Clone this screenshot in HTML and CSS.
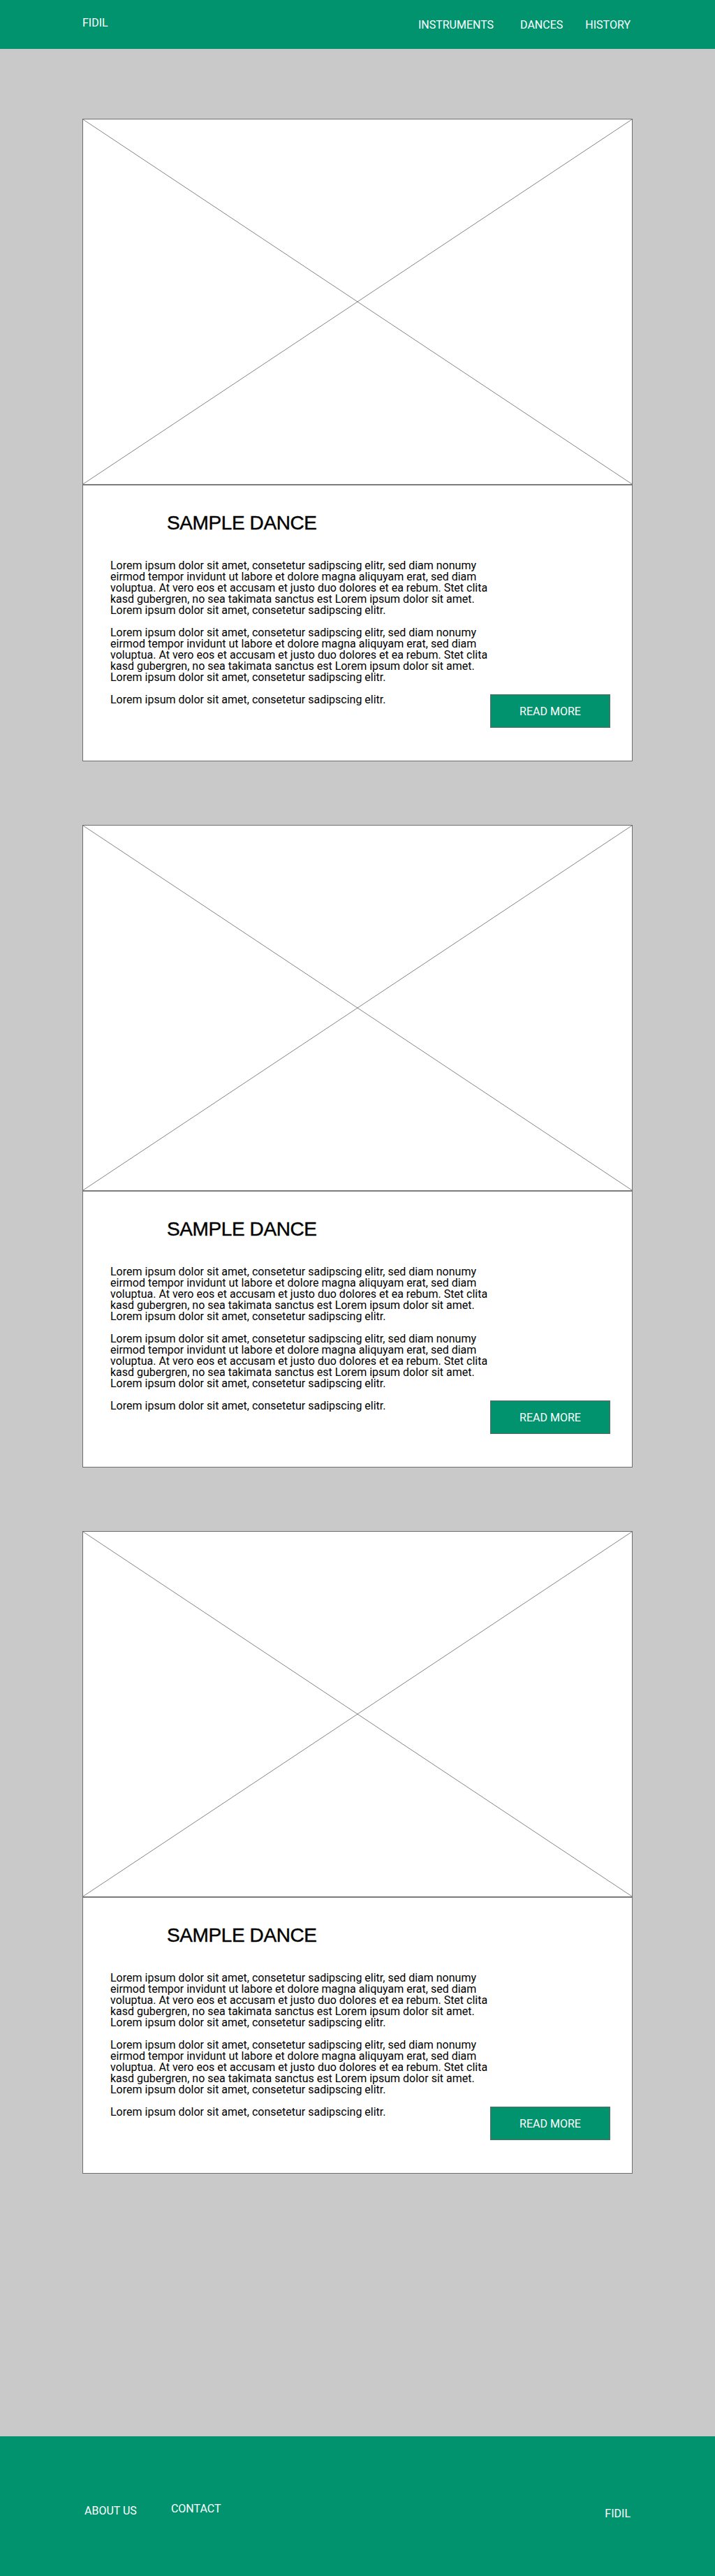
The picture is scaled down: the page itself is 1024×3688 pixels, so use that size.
FILE: index.html
```html
<!DOCTYPE html>
<html lang="en">
<head>
<meta charset="utf-8">
<title>FIDIL</title>
<link rel="stylesheet" href="styles.css">
</head>
<body>
<header class="topbar">
  <div class="brand">FIDIL</div>
  <nav class="nav">
    <a class="nav-item nav-instruments" href="#">INSTRUMENTS</a>
    <a class="nav-item nav-dances" href="#">DANCES</a>
    <a class="nav-item nav-history" href="#">HISTORY</a>
  </nav>
</header>

<main class="main">
  <article class="card">
    <div class="card-image">
      <svg class="placeholder" viewBox="0 0 100 100" preserveAspectRatio="none">
        <line x1="0" y1="0" x2="100" y2="100" vector-effect="non-scaling-stroke"/>
        <line x1="100" y1="0" x2="0" y2="100" vector-effect="non-scaling-stroke"/>
      </svg>
    </div>
    <div class="card-body">
      <h2 class="card-title">SAMPLE DANCE</h2>
      <p class="card-text">Lorem ipsum dolor sit amet, consetetur sadipscing elitr, sed diam nonumy<br>eirmod tempor invidunt ut labore et dolore magna aliquyam erat, sed diam<br>voluptua. At vero eos et accusam et justo duo dolores et ea rebum. Stet clita<br>kasd gubergren, no sea takimata sanctus est Lorem ipsum dolor sit amet.<br>Lorem ipsum dolor sit amet, consetetur sadipscing elitr.</p>
      <p class="card-text">Lorem ipsum dolor sit amet, consetetur sadipscing elitr, sed diam nonumy<br>eirmod tempor invidunt ut labore et dolore magna aliquyam erat, sed diam<br>voluptua. At vero eos et accusam et justo duo dolores et ea rebum. Stet clita<br>kasd gubergren, no sea takimata sanctus est Lorem ipsum dolor sit amet.<br>Lorem ipsum dolor sit amet, consetetur sadipscing elitr.</p>
      <div class="card-last">
        <p class="card-text">Lorem ipsum dolor sit amet, consetetur sadipscing elitr.</p>
        <a class="btn" href="#">READ MORE</a>
      </div>
    </div>
  </article>

  <article class="card">
    <div class="card-image">
      <svg class="placeholder" viewBox="0 0 100 100" preserveAspectRatio="none">
        <line x1="0" y1="0" x2="100" y2="100" vector-effect="non-scaling-stroke"/>
        <line x1="100" y1="0" x2="0" y2="100" vector-effect="non-scaling-stroke"/>
      </svg>
    </div>
    <div class="card-body">
      <h2 class="card-title">SAMPLE DANCE</h2>
      <p class="card-text">Lorem ipsum dolor sit amet, consetetur sadipscing elitr, sed diam nonumy<br>eirmod tempor invidunt ut labore et dolore magna aliquyam erat, sed diam<br>voluptua. At vero eos et accusam et justo duo dolores et ea rebum. Stet clita<br>kasd gubergren, no sea takimata sanctus est Lorem ipsum dolor sit amet.<br>Lorem ipsum dolor sit amet, consetetur sadipscing elitr.</p>
      <p class="card-text">Lorem ipsum dolor sit amet, consetetur sadipscing elitr, sed diam nonumy<br>eirmod tempor invidunt ut labore et dolore magna aliquyam erat, sed diam<br>voluptua. At vero eos et accusam et justo duo dolores et ea rebum. Stet clita<br>kasd gubergren, no sea takimata sanctus est Lorem ipsum dolor sit amet.<br>Lorem ipsum dolor sit amet, consetetur sadipscing elitr.</p>
      <div class="card-last">
        <p class="card-text">Lorem ipsum dolor sit amet, consetetur sadipscing elitr.</p>
        <a class="btn" href="#">READ MORE</a>
      </div>
    </div>
  </article>

  <article class="card">
    <div class="card-image">
      <svg class="placeholder" viewBox="0 0 100 100" preserveAspectRatio="none">
        <line x1="0" y1="0" x2="100" y2="100" vector-effect="non-scaling-stroke"/>
        <line x1="100" y1="0" x2="0" y2="100" vector-effect="non-scaling-stroke"/>
      </svg>
    </div>
    <div class="card-body">
      <h2 class="card-title">SAMPLE DANCE</h2>
      <p class="card-text">Lorem ipsum dolor sit amet, consetetur sadipscing elitr, sed diam nonumy<br>eirmod tempor invidunt ut labore et dolore magna aliquyam erat, sed diam<br>voluptua. At vero eos et accusam et justo duo dolores et ea rebum. Stet clita<br>kasd gubergren, no sea takimata sanctus est Lorem ipsum dolor sit amet.<br>Lorem ipsum dolor sit amet, consetetur sadipscing elitr.</p>
      <p class="card-text">Lorem ipsum dolor sit amet, consetetur sadipscing elitr, sed diam nonumy<br>eirmod tempor invidunt ut labore et dolore magna aliquyam erat, sed diam<br>voluptua. At vero eos et accusam et justo duo dolores et ea rebum. Stet clita<br>kasd gubergren, no sea takimata sanctus est Lorem ipsum dolor sit amet.<br>Lorem ipsum dolor sit amet, consetetur sadipscing elitr.</p>
      <div class="card-last">
        <p class="card-text">Lorem ipsum dolor sit amet, consetetur sadipscing elitr.</p>
        <a class="btn" href="#">READ MORE</a>
      </div>
    </div>
  </article>
</main>

<footer class="footer">
  <div class="footer-links">
    <a class="footer-link footer-about" href="#">ABOUT US</a>
    <a class="footer-link footer-contact" href="#">CONTACT</a>
  </div>
  <div class="footer-brand">FIDIL</div>
</footer>
</body>
</html>
```

FILE: styles.css
```css
* { box-sizing: border-box; }

html, body {
  margin: 0;
  padding: 0;
}

body {
  background: #c9c9c9;
  font-family: Roboto, "Liberation Sans", sans-serif;
  color: #000;
  height: 3688px;
  display: flex;
  flex-direction: column;
}

a { text-decoration: none; color: inherit; }

/* Header */
.topbar {
  height: 70px;
  background: #00936d;
  color: #fff;
  display: flex;
  align-items: flex-start;
  justify-content: space-between;
  padding: 0 121px 0 118px;
  font-size: 16px;
  line-height: 19px;
}

.brand {
  padding-top: 23px;
}

.nav {
  display: flex;
  padding-top: 26px;
}

.nav-item { display: block; }
.nav-dances { margin-left: 38px; }
.nav-history { margin-left: 32px; }

/* Main */
.main {
  flex: 1;
  padding: 100px 0 0 118px;
  display: flex;
  flex-direction: column;
  gap: 91px;
}

.card {
  width: 788px;
  border: 1px solid #6e6e6e;
  background: #fff;
}

.card-image {
  height: 524px;
  border-bottom: 2px solid #7c7c7c;
}

.placeholder {
  display: block;
  width: 100%;
  height: 100%;
}

.placeholder line {
  stroke: #858585;
  stroke-width: 1;
}

.card-body {
  height: 394px;
  padding: 37px 31px 0 39px;
}

.card-title {
  margin: 0 0 36px 81px;
  font-family: "Liberation Sans", Arial, sans-serif;
  font-weight: normal;
  font-size: 28px;
  line-height: 34px;
  letter-spacing: -0.4px;
  -webkit-text-stroke: 0.4px #000;
}

.card-text {
  margin: 0 0 16px 0;
  font-size: 16px;
  line-height: 16px;
}

.card-last {
  display: flex;
  justify-content: space-between;
  align-items: flex-start;
}

.card-last .card-text { margin: 0; }

.btn {
  display: flex;
  align-items: center;
  justify-content: center;
  width: 172px;
  height: 48px;
  background: #00936d;
  border: 1px solid #666;
  color: #fff;
  font-size: 16px;
}

/* Footer */
.footer {
  height: 200px;
  background: #00936d;
  color: #fff;
  display: flex;
  justify-content: space-between;
  align-items: flex-start;
  padding: 0 121px 0 121px;
  font-size: 16px;
  line-height: 19px;
}

.footer-links {
  display: flex;
  align-items: flex-start;
}

.footer-link { display: block; }
.footer-about { padding-top: 97px; }
.footer-contact { margin-left: 49px; padding-top: 94px; }

.footer-brand {
  padding-top: 101px;
}
```
